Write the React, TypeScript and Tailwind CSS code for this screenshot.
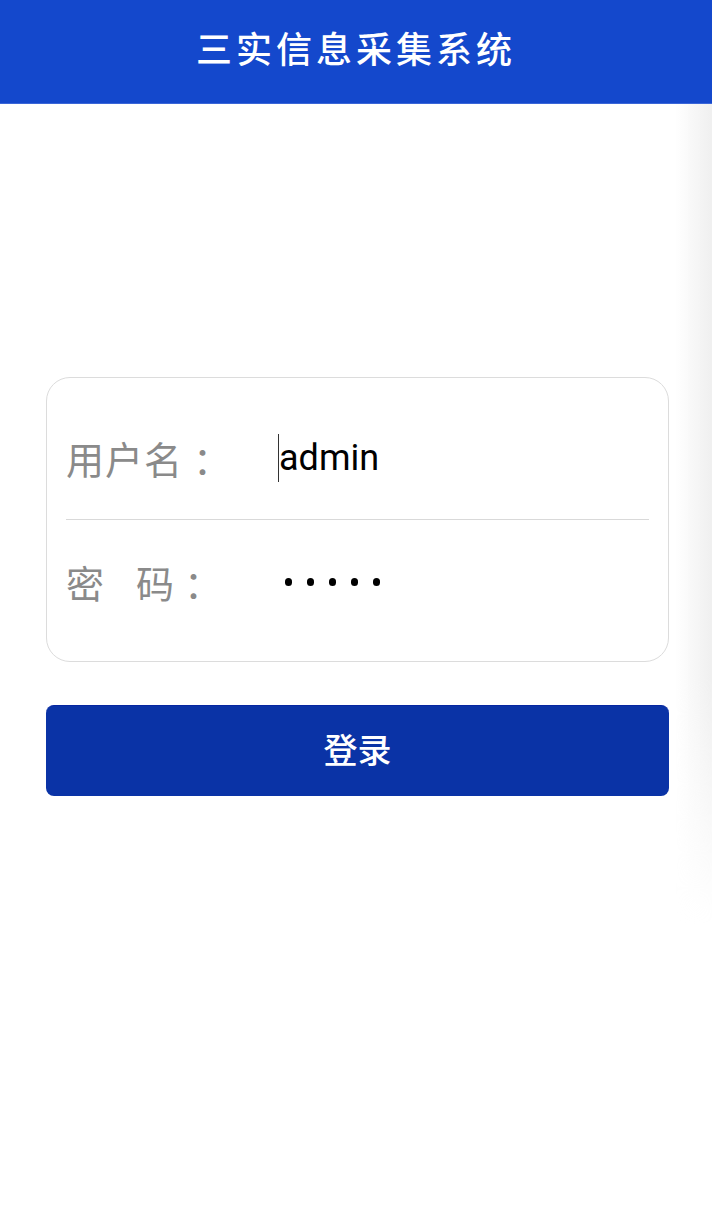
const cjk = "font-['Noto_Sans_CJK_SC','Noto_Sans',sans-serif]";

const App = () => {
  return (
    <div className="relative min-h-[1228px] bg-white">
      <header className="flex h-[104px] items-center justify-center bg-[#1448cc] border-b border-[#3a66d8] pb-[10px]">
        <h1 className={`${cjk} text-[36px] font-medium tracking-[4px] text-white`}>三实信息采集系统</h1>
      </header>

      <main className="pl-[46px] pr-[43px] pt-[273px]">
        <div className="rounded-[24px] border-[1.5px] border-[#dcdcdc] bg-white py-[18px]">
          <div className="flex h-[123px] items-center px-[19px]">
            <span className={`${cjk} flex w-[212px] text-[38px] text-[#8a8a8a] tracking-[1px]`}>
              <span>用户名</span>
              <span className="ml-[10px]">：</span>
            </span>
            <span className="flex items-center">
              <span className="h-[48px] w-px bg-[#333]" />
              <span className="font-['Roboto',sans-serif] text-[36px] text-black">admin</span>
            </span>
          </div>
          <div className="mx-[19px] h-px bg-[#d9d9d9]" />
          <div className="flex h-[123px] items-center px-[19px]">
            <span className={`${cjk} flex w-[212px] text-[38px] text-[#8a8a8a]`}>
              <span className="mr-[32px]">密</span>
              <span>码</span>
              <span className="ml-[10px]">：</span>
            </span>
            <span className="flex gap-[15px] pl-[7px]">
              {[0, 1, 2, 3, 4].map((i) => (
                <span key={i} className="h-[8px] w-[7px] rounded-full bg-black" />
              ))}
            </span>
          </div>
        </div>

        <button className="mt-[43px] flex h-[91px] w-full items-center justify-center rounded-[8px] border-t border-[#0626a0] bg-[#0a33a6] pb-[5px]">
          <span className={`${cjk} text-[34px] font-medium text-white`}>登录</span>
        </button>
      </main>

      <div className="pointer-events-none absolute right-0 top-[104px] h-[820px] w-[36px] bg-[linear-gradient(to_right,rgba(240,240,240,0),rgba(239,239,239,1))] [mask-image:linear-gradient(to_bottom,black_70%,transparent)]" />
    </div>
  );
};

export default App;
